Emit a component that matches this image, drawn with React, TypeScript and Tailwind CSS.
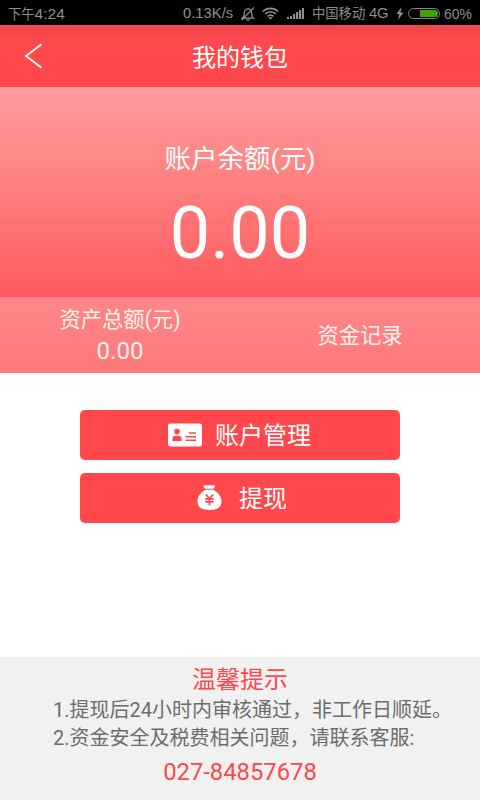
import React from "react";

function StatusBar() {
  return (
    <div className="flex h-[25px] items-center bg-black pt-[2px] pl-2 text-[13.3px] leading-none text-[#8e8e8e] font-['Liberation_Sans','Noto_Sans_CJK_SC',sans-serif]">
      <span className="w-[175px] whitespace-nowrap">
        下午<span className="text-[15.500px]">4:24</span>
      </span>
      <span className="w-[58px] whitespace-nowrap text-[14.800px]">0.13K/s</span>
      <svg className="h-4 w-[14px] shrink-0" viewBox="0 0 14 16" fill="none" stroke="#8e8e8e" strokeWidth="1.2">
        <path d="M1 12.2h11.5c-1.5-1-1.8-2-1.8-5C10.700 4 9 2.800 7 2.800S3.300 4 3.300 7.200c0 3-.5 4-2.300 5zM5.500 13.300c.5 1.400 2.500 1.400 3 0M13 1.500.8 14" />
      </svg>
      <svg className="ml-[7px] h-[13px] w-[17px] shrink-0" viewBox="0 0 17 13" fill="none" stroke="#8e8e8e" strokeWidth="1.7">
        <path d="M.7 4.500c4.500-4.300 11.100-4.300 15.600 0M3.200 7c3-3 7.600-3 10.600 0M5.600 9.300c1.700-1.500 4.100-1.500 5.800 0" />
        <path d="m6.700 10.700 1.800 1.900 1.800-1.900c-1-.9-2.600-.9-3.600 0z" fill="#8e8e8e" stroke="none" />
      </svg>
      <svg className="ml-[8px] h-[11px] w-[17px] shrink-0" viewBox="0 0 17 11" fill="#8e8e8e">
        <path d="M0 9h2v2H0zM3 8h2v3H3zM6 6h2.200v5H6zM9 4h2.200v7H9zM12 2h2.200v9H12zM15 0h2v11h-2z" />
      </svg>
      <span className="ml-[8px] w-[84px] whitespace-nowrap">
        中国移动 <span className="text-[14.800px]">4G</span>
      </span>
      <svg className="h-[13px] w-[8px] shrink-0" viewBox="0 0 8 13" fill="#8e8e8e">
        <path d="M5.500 0 .5 7h2.800L2 13l5.500-7.500H4.500z" />
      </svg>
      <div className="ml-[4px] flex h-[11px] w-[32px] shrink-0 items-center justify-end rounded-full border border-[#858585] p-[1px]">
        <div className="h-full w-[18px] rounded-r-full bg-[#449d0a]" />
      </div>
      <span className="ml-[4px] text-[14px]">60%</span>
    </div>
  );
}

function CardIcon() {
  return (
    <svg className="h-6 w-[34px]" viewBox="0 0 34 24">
      <rect width="34" height="23" y=".5" rx="2.500" fill="#fff" />
      <g fill="#ff474c">
        <circle cx="9" cy="8.600" r="2.800" />
        <path d="M4.500 18v-2.300c0-2 1.200-2.900 3-2.900h3c1.800 0 3 .9 3 2.900V18z" />
        <path d="M21 9.300h7v1.500h-7zM17.500 13H28v1.500H17.500zM17.500 16.600H28v1.500H17.500z" />
      </g>
    </svg>
  );
}

function MoneyBagIcon() {
  return (
    <svg className="h-[26px] w-[25px]" viewBox="0 0 25 26">
      <path d="M7.500.3h9.500c1.300 0 1.300 1.400.5 2.100L16.300 3.800H8.500L7 2.400C6.200 1.700 6.200.3 7.500.3z" fill="#fff" />
      <path d="M8.700 4.800h7.500c5 2.500 8.300 7 8.300 11.500 0 5.500-3.500 8.700-12 8.700S.5 21.800.5 16.300c0-4.500 3.200-9 8.200-11.500z" fill="#fff" />
      <path d="m9 9.500 3.500 4.400L16 9.500M8.300 13.900h8.400M8.300 16.900h8.400M12.500 13.900v6.300" fill="none" stroke="#ff474c" strokeWidth="1.700" />
    </svg>
  );
}

export default function App() {
  return (
    <div className="flex h-[800px] w-[480px] flex-col overflow-hidden bg-white text-white font-['Roboto','Noto_Sans_CJK_SC',sans-serif]">
      <StatusBar />
      <header className="grid h-[62px] grid-cols-[80px_1fr_80px] items-center bg-linear-to-b from-[#ed4549] via-[#ff484c] via-25% to-[#ff484c]">
        <svg className="ml-6 h-[26px] w-[19px]" viewBox="0 0 19 26" fill="none" stroke="#fff" strokeWidth="1.800">
          <path d="M17.500 1.200 2 13l15.500 11.800" />
        </svg>
        <h1 className="pt-[3px] text-center text-2xl leading-[30px]">我的钱包</h1>
      </header>
      <section className="flex h-[210px] flex-col items-center bg-linear-to-b from-[#ff9c9d] to-[#ff585c] pt-[56px]">
        <p className="text-[26.5px] leading-[32px]">账户余额(元)</p>
        <p className="mt-[17px] text-[72px] leading-[84px]">0.00</p>
      </section>
      <section className="grid h-[76px] grid-cols-2 items-center bg-linear-to-b from-[#ff8789] to-[#ff777a] text-center text-[21.300px] text-[#fff3ee]">
        <div className="pt-[1px]">
          <p className="leading-8">资产总额(元)</p>
          <p className="-mt-[1px] text-[24px] leading-8">0.00</p>
        </div>
        <p className="pt-[2px] leading-8">资金记录</p>
      </section>
      <main className="flex flex-1 flex-col gap-[12.500px] px-20 pt-[37px]">
        <button className="flex h-[50px] items-center justify-center gap-[13px] rounded-[5px] bg-[#ff474c] pr-[1px] text-2xl">
          <CardIcon />
          <span className="pt-[2px]">账户管理</span>
        </button>
        <button className="flex h-[50px] items-center justify-center gap-[17px] rounded-[5px] bg-[#ff474c] pl-[4px] text-2xl">
          <MoneyBagIcon />
          <span className="pt-[2px]">提现</span>
        </button>
      </main>
      <footer className="flex h-[143px] flex-col bg-[#f1f1f1] pt-[7px] text-[#ff474c]">
        <h2 className="text-center text-2xl leading-[32px]">温馨提示</h2>
        <div className="pl-[53px] text-[20px] leading-[28px] whitespace-nowrap text-[#6c6c6c]">
          <p>1.提现后24小时内审核通过，非工作日顺延。</p>
          <p>2.资金安全及税费相关问题，请联系客服:</p>
        </div>
        <p className="mt-[4px] text-center text-[23.800px] leading-[32px]">027-84857678</p>
      </footer>
    </div>
  );
}
